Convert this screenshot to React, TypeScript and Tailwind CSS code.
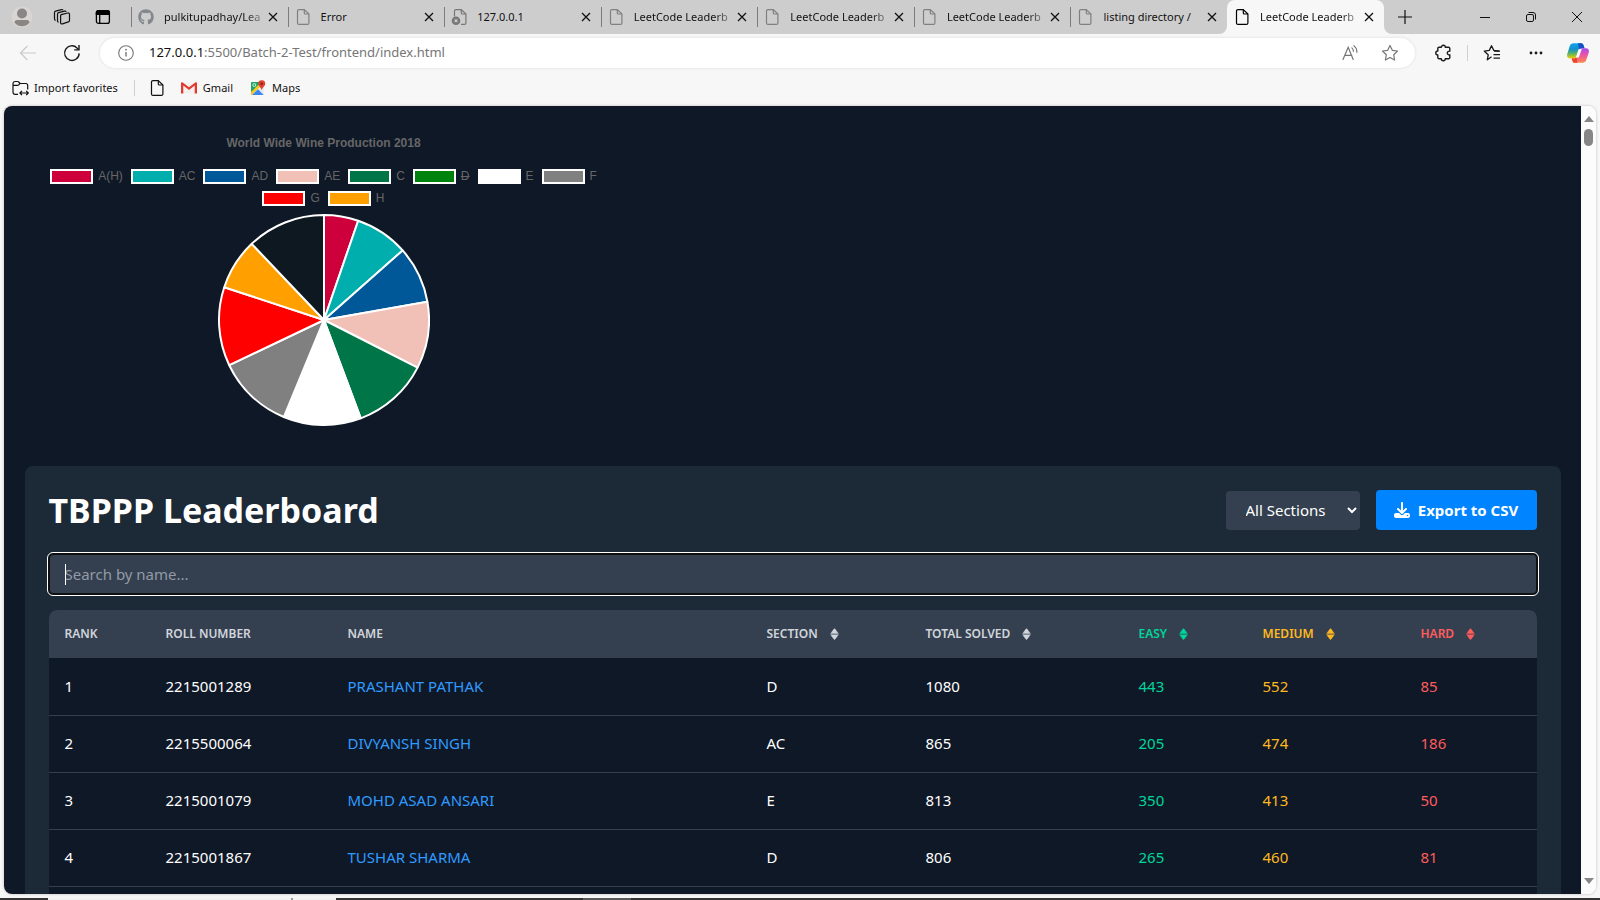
import type { ReactNode } from "react";
import { FaDownload, FaGithub } from "react-icons/fa6";

type IconProps = { className?: string };

function FileIcon({ className }: IconProps) {
  return (
    <svg viewBox="0 0 16 18" className={className} fill="none" stroke="currentColor" strokeWidth="1.2" strokeLinejoin="round">
      <path d="M4 1.6h5.3L13.9 6v8.9a1.5 1.5 0 0 1-1.5 1.5H4a1.5 1.5 0 0 1-1.5-1.5V3.1A1.5 1.5 0 0 1 4 1.6Z" />
      <path d="M9.3 1.6V5a1 1 0 0 0 1 1h3.6" />
    </svg>
  );
}

function BrokenFileIcon({ className }: IconProps) {
  return (
    <svg viewBox="0 0 16 18" className={className} fill="none" stroke="currentColor" strokeWidth="1.2" strokeLinejoin="round">
      <path d="M3.5 8.5V3.1A1.5 1.5 0 0 1 5 1.6h5.3L14.9 6v8.9a1.5 1.5 0 0 1-1.5 1.5H10" />
      <path d="M10.3 1.6V5a1 1 0 0 0 1 1h3.6" />
      <circle cx="5" cy="12.8" r="4.3" fill="currentColor" stroke="none" />
      <path d="m3.6 11.4 2.8 2.8m0-2.8-2.8 2.8" stroke="#cdcdcd" />
    </svg>
  );
}

function CloseIcon({ className }: IconProps) {
  return (
    <svg viewBox="0 0 10 10" className={className} fill="none" stroke="currentColor" strokeWidth="1.3">
      <path d="m1 1 8 8M9 1 1 9" />
    </svg>
  );
}

function SortIcon() {
  return (
    <svg viewBox="0 0 9 12" className="h-3 w-[9px]" fill="currentColor">
      <path d="M.7 5.400 3.900 1a.8.8 0 0 1 1.200 0l3.200 4.400c.3.400 0 .100-.3.100H1c-.3 0-.6.300-.3-.100Z" stroke="currentColor" strokeWidth=".4" />
      <path d="M.7 6.800 3.900 11.200a.8.8 0 0 0 1.200 0l3.200-4.400c.3-.400 0-.100-.3-.100H1c-.3 0-.6-.300-.3.100Z" stroke="currentColor" strokeWidth=".4" />
    </svg>
  );
}

function WorkspacesIcon() {
  return (
    <svg viewBox="0 0 18 18" className="size-[18px]" fill="none" stroke="currentColor" strokeWidth="1.2" strokeLinejoin="round">
      <path d="M8.2 6.6 14.8 5c.9-.2 1.7.3 1.7 1.2v6.2c0 .7-.4 1.3-1.1 1.5l-6 2c-.9.3-1.8-.2-1.8-1.1V7.9c0-.7.2-1.1.6-1.3Z" />
      <path d="M5.600 14.200c-.7-.1-1.1-.6-1.1-1.3V6.200c0-.8.4-1.300 1.100-1.500l6-1.600c.7-.2 1.400.1 1.700.7" />
      <path d="M2.700 12.400c-.7-.1-1.200-.6-1.200-1.300V4.600c0-.8.4-1.300 1.100-1.500l5.800-1.500c.7-.2 1.300 0 1.700.6" />
    </svg>
  );
}

function TabActionsIcon() {
  return (
    <svg viewBox="0 0 16 16" className="size-4" fill="none" stroke="currentColor" strokeWidth="1.3">
      <rect x="1.4" y="1.6" width="13" height="12.8" rx="2.2" />
      <path d="M1.400 3.600c0-1.200.8-2 2-2h9c1.200 0 2 .8 2 2v1.800h-13Z" fill="currentColor" />
      <path d="M4.700 5v9.400" />
    </svg>
  );
}

function BackIcon() {
  return (
    <svg viewBox="0 0 18 16" className="h-4 w-[18px]" fill="none" stroke="currentColor" strokeWidth="1.1">
      <path d="M17 8H1.600M8.400 1 1.400 8l7 7" />
    </svg>
  );
}

function ReloadIcon() {
  return (
    <svg viewBox="0 0 18 18" className="size-[18px]" fill="none" stroke="currentColor" strokeWidth="1.4">
      <path d="M16.200 9.400A7.300 7.300 0 1 1 14 3.900l1.800 1.600" />
      <path d="M16 1v4.900h-4.800" />
    </svg>
  );
}

function InfoIcon() {
  return (
    <svg viewBox="0 0 16 16" className="size-4" fill="none" stroke="currentColor" strokeWidth="1.1">
      <circle cx="8" cy="8" r="7.3" />
      <path d="M8 7v4.600" strokeWidth="1.4" />
      <circle cx="8" cy="4.700" r=".9" fill="currentColor" stroke="none" />
    </svg>
  );
}

function ReadAloudIcon() {
  return (
    <svg viewBox="0 0 18 18" className="size-[18px]" fill="none" stroke="currentColor" strokeWidth="1.2" strokeLinecap="round">
      <path d="M2 15.400 7.200 3.200l5 12.200M3.700 11.400h7" />
      <path d="M10.900 3.900c1 .8 1.500 2 1.500 3.400" />
      <path d="M12.900 1.600c1.900 1.500 3 3.600 3 6.600" />
    </svg>
  );
}

function StarIcon() {
  return (
    <svg viewBox="0 0 18 18" className="size-[18px]" fill="none" stroke="currentColor" strokeWidth="1.2" strokeLinejoin="round">
      <path d="m9 1.500 2.300 4.800 5.200.7-3.800 3.700.9 5.300L9 13.500 4.400 16l.9-5.300L1.500 7l5.200-.7Z" />
    </svg>
  );
}

function PuzzleIcon() {
  return (
    <svg viewBox="0 0 18 18" className="size-[18px]" fill="none" stroke="currentColor" strokeWidth="1.4" strokeLinejoin="round">
      <path d="M7.300 3.300a2 2 0 0 1 4 0h3.300a1.200 1.200 0 0 1 1.200 1.200v2.700a1.900 1.900 0 1 0 0 3.600v2.700a1.200 1.200 0 0 1-1.200 1.200h-3.300a2 2 0 0 1-4 0H5a1.200 1.200 0 0 1-1.200-1.200V11a2 2 0 0 1 0-4V4.500A1.200 1.200 0 0 1 5 3.300Z" />
    </svg>
  );
}

function FavoritesIcon() {
  return (
    <svg viewBox="0 0 18 18" className="size-[18px]" fill="none" stroke="currentColor" strokeWidth="1.3" strokeLinejoin="round">
      <path d="M8.500 12.800 4.300 15.800l.9-5L1.300 7.200l5-.8L8.500 1.700l2.300 4.700 5.400.8" />
      <path d="M11 7.200h6M10.500 10.700H17M10.500 14.200H17" />
    </svg>
  );
}

function CopilotIcon() {
  return (
    <svg viewBox="0 0 22 20" className="h-5 w-[22px]">
      <defs>
        <linearGradient id="cpA" x1="0" y1="0" x2="0" y2="1">
          <stop offset="0" stopColor="#10a5f0" />
          <stop offset=".4" stopColor="#1690c8" />
          <stop offset=".65" stopColor="#4fb06a" />
          <stop offset="1" stopColor="#f5d000" />
        </linearGradient>
        <linearGradient id="cpB" x1="0" y1="0" x2="0" y2="1">
          <stop offset="0" stopColor="#a44bf0" />
          <stop offset=".5" stopColor="#f0569b" />
          <stop offset="1" stopColor="#ff8a4a" />
        </linearGradient>
      </defs>
      <path d="M6.500.2h7.700c1.500 0 2 1 2.500 2.600l.8 2.500h-2.600c-1.700 0-2.600.8-3.100 2.500l-1.700 5.700C9.600 15 8.800 15.400 7.400 15.400H3C.8 15.400-.4 13.700.2 11.300L2.600 3.400C3.300 1.200 4.500.2 6.500.2Z" fill="url(#cpA)" />
      <path d="M11 .2h3.200c1.500 0 2 1 2.500 2.600l.8 2.500h-2.600c-1.400 0-2.200.5-2.700 1.600Z" fill="#174fc4" />
      <path d="M15.500 19.800H7.800c-1.500 0-2-1-2.500-2.600l-.6-1.800h2.700c1.400 0 2.200-.4 2.700-1.900l1.700-5.700c.5-1.700 1.400-2.500 3.100-2.500H19c2.200 0 3.400 1.700 2.800 4.100l-2.400 7.200c-.7 2.200-1.900 3.200-3.900 3.200Z" fill="url(#cpB)" />
      <path d="M10.500 19.800H7.800c-1.500 0-2-1-2.500-2.600l-.6-1.800h2.700c1 0 1.700-.2 2.200-.9Z" fill="#f0442c" />
      <path d="M12.500 6h2.300l-3 8.600H8.900l2-6.700C11.200 6.800 11.600 6 12.500 6Z" fill="#fff" />
    </svg>
  );
}

function ImportIcon() {
  return (
    <svg viewBox="0 0 17 17" className="size-[17px]" fill="none" stroke="currentColor" strokeWidth="1.2" strokeLinejoin="round">
      <path d="M6 14.300H2.900A2 2 0 0 1 1 12.300V3.500a2 2 0 0 1 1.900-2h2.600c.5 0 .9.200 1.200.5l1.300 1.500h5.700a2 2 0 0 1 2 2v4" />
      <path d="M1 5.400h4.500c.5 0 .9-.2 1.200-.5L8 3.500" />
      <path d="M8.200 13h8M10 10.900 7.900 13l2.100 2.100M14.200 10.900l2.100 2.100-2.100 2.100" />
    </svg>
  );
}

function GmailIcon() {
  return (
    <svg viewBox="0 0 16 12" className="h-3 w-4">
      <path d="M1 .5h14v11H1Z" fill="#f3f1f0" />
      <path d="M0 1.300C0 .3 1 0 1.700.5L8 5.300 14.300.5C15 0 16 .3 16 1.300V11.500h-2.300V3.600L8 7.900 2.300 3.600v7.900H0Z" fill="#e23a2e" />
    </svg>
  );
}

function MapsIcon() {
  return (
    <svg viewBox="0 0 16 16" className="size-4">
      <rect x="1" y="2" width="13" height="13" rx="1" fill="#e8eaec" />
      <path d="M1 2.800C1 2.300 1.300 2 1.800 2H10v4L1 15Z" fill="#1ea362" />
      <path d="m1 12 7.500-7.300 1.800 1.700L1.800 15H1Z" fill="#fbc919" />
      <path d="M2 15 8 9.300 13.700 15Z" fill="#3a86f2" />
      <circle cx="4.300" cy="5" r="1.500" fill="none" stroke="#fff" strokeWidth=".8" />
      <path d="M11.700.3a3.400 3.400 0 0 1 3.500 3.400c0 2.300-2.500 3.100-3.500 6.500-1-3.400-3.500-4.200-3.500-6.500A3.400 3.400 0 0 1 11.700.3Z" fill="#e0402f" />
      <circle cx="11.700" cy="3.700" r="1.200" fill="#8f1f16" />
    </svg>
  );
}

type TabInfo = { title: string; kind: "github" | "file" | "broken" };

const tabs: TabInfo[] = [
  { title: "pulkitupadhay/Lea", kind: "github" },
  { title: "Error", kind: "file" },
  { title: "127.0.0.1", kind: "broken" },
  { title: "LeetCode Leaderb", kind: "file" },
  { title: "LeetCode Leaderb", kind: "file" },
  { title: "LeetCode Leaderb", kind: "file" },
  { title: "listing directory /", kind: "file" },
];

function TabBody({ icon, title }: { icon: ReactNode; title: string }) {
  const fade = title.length === 16 || title.length === 17;
  return (
    <>
      {icon}
      <span className={`flex-1 whitespace-nowrap ${fade ? "mask-r-from-80% mask-r-to-105%" : ""}`}>{title}</span>
      <button type="button" aria-label={`Close ${title}`} className="mr-[7px] grid size-4 shrink-0 place-items-center">
        <CloseIcon className="size-[10px]" />
      </button>
    </>
  );
}

function TabStrip() {
  return (
    <header className="flex h-[34px] shrink-0 items-stretch bg-[#cdcdcd] text-[11px] text-[#111]">
      <div className="flex w-[131px] shrink-0 items-center gap-5 pl-[11px]">
        <button type="button" aria-label="Profile">
          <svg viewBox="0 0 22 22" className="size-[22px]">
            <circle cx="11" cy="11" r="10.500" fill="#d9d5d2" />
            <circle cx="11" cy="7.500" r="5" fill="#8a8684" />
            <path d="M3.500 16.500c0-1.500 1-2.500 2.500-2.500h10c1.500 0 2.500 1 2.500 2.500-1.700 2.400-4.300 3.800-7.500 3.800s-5.800-1.400-7.500-3.800Z" fill="#8a8684" />
          </svg>
        </button>
        <button type="button" aria-label="Workspaces"><WorkspacesIcon /></button>
        <button type="button" aria-label="Tab actions" className="ml-1 text-black"><TabActionsIcon /></button>
      </div>
      <div className="flex w-[1096px]">
        {tabs.map((tab, i) => (
          <div key={i} className="flex min-w-0 flex-1 items-center">
            <span className="mr-[6px] h-5 w-px shrink-0 bg-[#7d7d7d]" />
            <TabBody
              title={tab.title}
              icon={
                tab.kind === "github" ? (
                  <FaGithub className="mr-[10px] size-4 shrink-0 text-[#84888c]" />
                ) : tab.kind === "broken" ? (
                  <BrokenFileIcon className="mr-[10px] h-[18px] w-4 shrink-0 text-[#777]" />
                ) : (
                  <FileIcon className="mr-[10px] h-[18px] w-4 shrink-0 text-[#808080]" />
                )
              }
            />
          </div>
        ))}
      </div>
      <div className="relative flex w-[157px] items-center rounded-t-lg bg-[#f7f7f7] pl-[7px]">
        <span className="absolute bottom-0 -left-2 size-2 bg-[#f7f7f7]">
          <span className="block size-2 rounded-br-lg bg-[#cdcdcd]" />
        </span>
        <span className="absolute -right-2 bottom-0 size-2 bg-[#f7f7f7]">
          <span className="block size-2 rounded-bl-lg bg-[#cdcdcd]" />
        </span>
        <TabBody title="LeetCode Leaderb" icon={<FileIcon className="mr-[10px] h-[18px] w-4 shrink-0 text-black" />} />
      </div>
      <button type="button" aria-label="New tab" className="ml-[14px]">
        <svg viewBox="0 0 14 14" className="size-[14px]" fill="none" stroke="currentColor" strokeWidth="1.200">
          <path d="M7 0v14M0 7h14" />
        </svg>
      </button>
      <div className="ml-auto flex items-center gap-9 pr-[18px]">
        <button type="button" aria-label="Minimize">
          <svg viewBox="0 0 10 10" className="size-[10px]" stroke="currentColor"><path d="M0 5.500h10" /></svg>
        </button>
        <button type="button" aria-label="Restore">
          <svg viewBox="0 0 10 10" className="size-[10px]" fill="none" stroke="currentColor">
            <rect x=".5" y="2.500" width="7" height="7" rx="1.500" />
            <path d="M2.500.5H7A2.500 2.500 0 0 1 9.500 3v4.500" />
          </svg>
        </button>
        <button type="button" aria-label="Close window">
          <svg viewBox="0 0 10 10" className="size-[10px]" stroke="currentColor"><path d="m0 0 10 10M10 0 0 10" /></svg>
        </button>
      </div>
    </header>
  );
}

function Toolbar() {
  return (
    <div className="flex h-[38px] shrink-0 items-center bg-[#f7f7f7] pr-[11px] pl-[19px] text-[#1b1b1b]">
      <button type="button" aria-label="Back" className="text-[#c9c9c9]"><BackIcon /></button>
      <button type="button" aria-label="Reload" className="ml-[26px]"><ReloadIcon /></button>
      <div className="ml-[19px] flex h-[30px] flex-1 items-center rounded-full bg-white pr-4 pl-[18px] text-[#767676] shadow-[0_0_3px_rgba(0,0,0,0.12)]">
        <InfoIcon />
        <p className="ml-[15px] flex-1 text-[13px] text-[#767676]">
          <span className="text-[#111]">127.0.0.1</span>:5500/Batch-2-Test/frontend/index.html
        </p>
        <button type="button" aria-label="Read aloud"><ReadAloudIcon /></button>
        <button type="button" aria-label="Add to favorites" className="ml-[22px]"><StarIcon /></button>
      </div>
      <button type="button" aria-label="Extensions" className="ml-[19px]"><PuzzleIcon /></button>
      <span className="ml-[15px] h-4 w-px bg-[#cfcfcf]" />
      <button type="button" aria-label="Favorites" className="ml-[15px]"><FavoritesIcon /></button>
      <button type="button" aria-label="More" className="ml-7">
        <svg viewBox="0 0 14 4" className="h-1 w-[14px]" fill="currentColor">
          <circle cx="2" cy="2" r="1.400" /><circle cx="7" cy="2" r="1.400" /><circle cx="12" cy="2" r="1.400" />
        </svg>
      </button>
      <button type="button" aria-label="Copilot" className="ml-6"><CopilotIcon /></button>
    </div>
  );
}

function BookmarksBar() {
  return (
    <nav className="flex h-[34px] shrink-0 items-center bg-[#f7f7f7] pb-[2px] pl-3 text-[11px] text-[#111]">
      <a href="#import" className="flex items-center gap-[5px]"><ImportIcon />Import favorites</a>
      <span className="ml-4 h-4 w-px bg-[#cfcfcf]" />
      <a href="#page" aria-label="Page" className="ml-[14px]"><FileIcon className="h-[18px] w-4" /></a>
      <a href="#gmail" className="ml-4 flex items-center gap-[6px]"><GmailIcon />Gmail</a>
      <a href="#maps" className="ml-[17px] flex items-center gap-[6px]"><MapsIcon />Maps</a>
    </nav>
  );
}

const legend = [
  { label: "A(H)", color: "bg-[#cd003c]" },
  { label: "AC", color: "bg-[#00aeae]" },
  { label: "AD", color: "bg-[#005899]" },
  { label: "AE", color: "bg-[#f1c1b8]" },
  { label: "C", color: "bg-[#007547]" },
  { label: "D", color: "bg-[#00820f]", hidden: true },
  { label: "E", color: "bg-white" },
  { label: "F", color: "bg-[#808080]" },
  { label: "G", color: "bg-[#ff0000]" },
  { label: "H", color: "bg-[#ffa000]" },
];

const slices = [
  { from: 0, to: 19, color: "#cd003c" },
  { from: 19, to: 48.5, color: "#00aeae" },
  { from: 48.5, to: 80, color: "#005899" },
  { from: 80, to: 117, color: "#f1c1b8" },
  { from: 117, to: 159.5, color: "#007547" },
  { from: 159.5, to: 202.5, color: "#ffffff" },
  { from: 202.5, to: 244.5, color: "#808080" },
  { from: 244.5, to: 288.2, color: "#ff0000" },
  { from: 288.2, to: 316.5, color: "#ffa000" },
  { from: 316.5, to: 360, color: "#0d1820" },
];

function slicePath(from: number, to: number) {
  const point = (deg: number) => {
    const a = (deg * Math.PI) / 180;
    return `${(106 + 105 * Math.sin(a)).toFixed(2)} ${(106 - 105 * Math.cos(a)).toFixed(2)}`;
  };
  return `M106 106L${point(from)}A105 105 0 0 1 ${point(to)}Z`;
}

function WineChart() {
  return (
    <figure className="flex w-full max-w-[598px] flex-col items-center font-['Liberation_Sans',Arial,sans-serif] text-[12px] text-[#666]">
      <figcaption className="py-[5px] leading-4 font-bold">World Wide Wine Production 2018</figcaption>
      <ul className="mt-[9px] flex flex-wrap justify-center gap-x-2">
        {legend.map((item) => (
          <li key={item.label} className="flex h-[22px] items-center gap-[5px]">
            <span className={`h-[15px] w-[43px] border-2 border-white ${item.color}`} />
            <span className={item.hidden ? "line-through" : ""}>{item.label}</span>
          </li>
        ))}
      </ul>
      <svg viewBox="0 0 212 212" className="mt-[5px] size-[212px]" role="img" aria-label="Pie chart">
        {slices.map((s) => (
          <path key={s.from} d={slicePath(s.from, s.to)} fill={s.color} stroke="#fff" strokeWidth="2" strokeLinejoin="bevel" />
        ))}
      </svg>
    </figure>
  );
}

const columns = [
  { label: "Rank", width: "w-[101px]", color: "text-[#d1d5db]", sortable: false },
  { label: "Roll Number", width: "w-[182px]", color: "text-[#d1d5db]", sortable: false },
  { label: "Name", width: "", color: "text-[#d1d5db]", sortable: false },
  { label: "Section", width: "w-[159px]", color: "text-[#d1d5db]", sortable: true },
  { label: "Total Solved", width: "w-[213px]", color: "text-[#d1d5db]", sortable: true },
  { label: "Easy", width: "w-[124px]", color: "text-[#00d69a]", sortable: true },
  { label: "Medium", width: "w-[158px]", color: "text-[#ffb820]", sortable: true },
  { label: "Hard", width: "w-[132px]", color: "text-[#ff5c5c]", sortable: true },
];

const students = [
  { rank: 1, roll: "2215001289", name: "PRASHANT PATHAK", section: "D", total: 1080, easy: 443, medium: 552, hard: 85 },
  { rank: 2, roll: "2215500064", name: "DIVYANSH SINGH", section: "AC", total: 865, easy: 205, medium: 474, hard: 186 },
  { rank: 3, roll: "2215001079", name: "MOHD ASAD ANSARI", section: "E", total: 813, easy: 350, medium: 413, hard: 50 },
  { rank: 4, roll: "2215001867", name: "TUSHAR SHARMA", section: "D", total: 806, easy: 265, medium: 460, hard: 81 },
];

function Leaderboard() {
  return (
    <section className="mt-10 min-h-[480px] rounded-lg bg-[#1c2936] p-6">
      <div className="flex h-10 items-center justify-between">
        <h1 className="text-[34px] leading-10 font-bold text-white">TBPPP Leaderboard</h1>
        <div className="flex items-center gap-4">
          <select aria-label="Section" className="h-[39px] w-[134px] rounded bg-[#344050] px-4 text-[15px] text-white">
            <option>All Sections</option>
          </select>
          <button type="button" className="flex h-10 min-w-[161px] items-center justify-center gap-2 rounded bg-[#0084ff] px-4 text-[15px] font-bold text-white">
            <FaDownload className="size-4" />
            Export to CSV
          </button>
        </div>
      </div>
      <div className="relative mt-6">
        <input
          type="text"
          aria-label="Search by name"
          placeholder="Search by name..."
          className="block h-10 w-full rounded border border-[#101010] bg-[#344050] px-[15px] text-[15px] text-white ring-1 ring-[#101010] outline-1 outline-offset-1 outline-white placeholder:text-[#929aa6]"
        />
        <span className="absolute top-[10px] left-4 h-[21px] w-px bg-white" />
      </div>
      <div className="mt-4 overflow-hidden rounded-t-lg">
        <table className="w-full table-fixed border-collapse bg-[#0f1827] text-left text-[15px] text-white">
          <thead className="bg-[#344050] text-[12px] uppercase">
            <tr className="h-12">
              {columns.map((col) => (
                <th key={col.label} scope="col" className={`px-4 font-semibold ${col.width} ${col.color}`}>
                  {col.sortable ? (
                    <button type="button" className="flex items-center gap-3 uppercase">
                      {col.label}
                      <SortIcon />
                    </button>
                  ) : (
                    col.label
                  )}
                </th>
              ))}
            </tr>
          </thead>
          <tbody>
            {students.map((s) => (
              <tr key={s.rank} className="h-[57px] border-b border-[#344050]">
                <td className="px-4">{s.rank}</td>
                <td className="px-4">{s.roll}</td>
                <td className="px-4"><a href={`#${s.roll}`} className="text-[#2f9bff]">{s.name}</a></td>
                <td className="px-4">{s.section}</td>
                <td className="px-4">{s.total}</td>
                <td className="px-4 text-[#00d69a]">{s.easy}</td>
                <td className="px-4 text-[#ffb820]">{s.medium}</td>
                <td className="px-4 text-[#ff5c5c]">{s.hard}</td>
              </tr>
            ))}
            <tr className="h-[57px]"><td colSpan={8} /></tr>
          </tbody>
        </table>
      </div>
    </section>
  );
}

function Scrollbar() {
  return (
    <div className="flex w-[15px] shrink-0 flex-col items-center bg-[#fcfcfc] pt-[10px] pb-[10px]">
      <svg viewBox="0 0 10 6" className="h-[6px] w-[10px]"><path d="M0 6 5 0l5 6Z" fill="#868686" /></svg>
      <span className="mt-[7px] h-[17px] w-[9px] rounded-full bg-[#868686]" />
      <svg viewBox="0 0 10 6" className="mt-auto h-[6px] w-[10px]"><path d="M0 0h10L5 6Z" fill="#868686" /></svg>
    </div>
  );
}

export default function App() {
  return (
    <div className="flex h-screen flex-col overflow-hidden bg-[#f7f7f7] font-['Noto_Sans','Open_Sans',sans-serif]">
      <TabStrip />
      <Toolbar />
      <BookmarksBar />
      <div className="mx-1 flex min-h-0 flex-1 overflow-hidden rounded-lg shadow-[0_0_3px_rgba(0,0,0,0.25)]">
        <main className="min-w-0 flex-1 overflow-hidden bg-[#0f1827] pt-6">
          <div className="mx-auto max-w-[1536px]">
            <WineChart />
            <Leaderboard />
          </div>
        </main>
        <Scrollbar />
      </div>
      <footer className="mt-1 flex h-[2px] shrink-0 bg-[#333]">
        <span className="ml-12 w-[243px] bg-[#f2f2f2]" />
        <span className="w-[2px] bg-[#999]" />
        <span className="w-[43px] bg-[#f2f2f2]" />
        <span className="ml-[247px] w-12 bg-[#5a5a5a]" />
      </footer>
    </div>
  );
}
